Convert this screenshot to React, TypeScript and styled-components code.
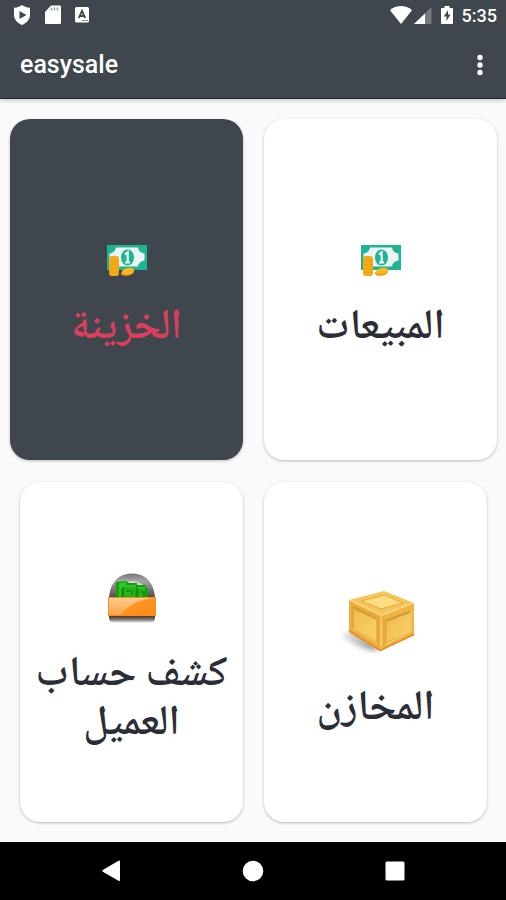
import React from 'react';
import styled, { createGlobalStyle } from 'styled-components';

const GlobalStyle = createGlobalStyle`
  *, *::before, *::after { box-sizing: border-box; }
  body {
    margin: 0;
    background: #fafafa;
    font-family: Roboto, 'Noto Sans', sans-serif;
  }
  button { border: 0; padding: 0; background: none; font: inherit; color: inherit; cursor: pointer; }
  svg { display: block; flex: none; }
`;

const Screen = styled.div`
  display: flex;
  flex-direction: column;
  min-height: 100vh;
`;

const Header = styled.header`
  flex: none;
  background: #40464e;
  color: #fff;
  border-bottom: 1px solid #25262f;
  box-shadow: 0 1px 5px rgba(0, 0, 0, 0.25);
`;

const StatusBar = styled.div`
  display: flex;
  align-items: center;
  justify-content: space-between;
  height: 32px;
  padding: 0 9px 0 12px;
`;

const StatusIcons = styled.div<{ $gap: number }>`
  display: flex;
  align-items: center;
  gap: ${({ $gap }) => $gap}px;
`;

const Clock = styled.time`
  font-size: 18px;
  line-height: 24px;
  font-weight: 500;
`;

const AppBar = styled.div`
  display: flex;
  align-items: center;
  justify-content: space-between;
  height: 66px;
  padding: 0 10px 0 20px;
`;

const Title = styled.h1`
  margin: 0;
  font-size: 25px;
  line-height: 32px;
  font-weight: 500;
`;

const MenuButton = styled.button`
  display: grid;
  place-items: center;
  width: 32px;
  height: 48px;
`;

const Main = styled.main`
  flex: 1;
  display: grid;
  grid-template-rows: 1fr 1fr;
  gap: 22px;
  padding: 20px 9px 20px 10px;
`;

const CardRow = styled.div<{ $inset?: boolean }>`
  display: grid;
  grid-template-columns: 1fr 1fr;
  gap: 21px;
  padding: 0 ${({ $inset }) => ($inset ? 10 : 0)}px;
`;

const Card = styled.button<{ $selected?: boolean }>`
  display: flex;
  flex-direction: column;
  align-items: center;
  justify-content: center;
  gap: 29px;
  padding: 20px 8px 0;
  border-radius: 20px;
  background: ${({ $selected }) => ($selected ? '#40464e' : '#fff')};
  color: ${({ $selected }) => ($selected ? '#dc3f5c' : '#2b2e36')};
  box-shadow: 0 1px 3px rgba(0, 0, 0, 0.26);
`;

const CardLabel = styled.span`
  font-family: 'Noto Naskh Arabic', 'DejaVu Sans', sans-serif;
  font-size: 42px;
  font-weight: 600;
  line-height: 49px;
  text-align: center;
`;

const NavBar = styled.nav`
  flex: none;
  display: grid;
  grid-template-columns: repeat(3, 142px);
  justify-content: center;
  height: 58px;
  background: #000;
  color: #fff;
`;

const NavButton = styled.button`
  display: grid;
  place-items: center;
`;

const ShieldIcon = () => (
  <svg width="20" height="22" viewBox="0 0 20 22" aria-hidden="true">
    <path fill="#fff" d="M10 0c2 1.500 4.500 2.500 8 2.800V10c0 4.500-3.500 8-8 10-4.500-2-8-5.500-8-10V2.800C5.500 2.500 8 1.500 10 0z" />
    <path fill="#40464e" d="M7.500 6v8l7-4z" />
  </svg>
);

const SdCardIcon = () => (
  <svg width="18" height="22" viewBox="0 0 18 22" aria-hidden="true">
    <path fill="#fff" d="M7 .5h8.500c1 0 1.500.5 1.500 1.500v15.500c0 1-.5 1.500-1.500 1.500h-13c-1 0-1.500-.5-1.500-1.500V7z" />
    <path stroke="#9a9da1" strokeWidth="1.500" d="M7.500 2.500v3M10.500 2.500v3M13.500 2.500v3" />
  </svg>
);

const LetterIcon = () => (
  <svg width="16" height="18" viewBox="0 0 16 18" aria-hidden="true">
    <rect x="1" y="0" width="14" height="15.500" rx="1.500" fill="#fff" />
    <path fill="none" stroke="#40464e" strokeWidth="1.800" d="M4.800 11 8 3.800 11.200 11M6 9h4" />
    <path stroke="#8d9195" d="M8 13.500h6" />
  </svg>
);

const WifiIcon = () => (
  <svg width="22" height="20" viewBox="0 0 22 20" aria-hidden="true">
    <path fill="#fff" d="M0 4.200C6.500-1.300 15.500-1.300 22 4.200L11 18z" />
  </svg>
);

const SignalIcon = () => (
  <svg width="18" height="18" viewBox="0 0 18 18" aria-hidden="true">
    <path fill="#777b80" d="M17.500 0v17H0z" />
    <path fill="#fff" d="M11 6.500V17H0z" />
  </svg>
);

const BatteryIcon = () => (
  <svg width="12" height="20" viewBox="0 0 12 20" aria-hidden="true">
    <path fill="#fff" d="M3.500 0h5v2H11c.6 0 1 .4 1 1v14c0 .6-.4 1-1 1H1c-.6 0-1-.4-1-1V3c0-.6.4-1 1-1h2.500z" />
    <path fill="#40464e" d="M7 4 2.800 10.500h2.700V15l4-6.500H7z" />
  </svg>
);

const MoreIcon = () => (
  <svg width="8" height="24" viewBox="0 0 8 24" fill="#fff" aria-hidden="true">
    <circle cx="4" cy="4.500" r="2.700" />
    <circle cx="4" cy="12" r="2.700" />
    <circle cx="4" cy="19.500" r="2.700" />
  </svg>
);

const MoneyIcon = () => (
  <svg width="40" height="32" viewBox="0 0 40 32" aria-hidden="true">
    <rect width="40" height="25" y="1" fill="#1fb592" />
    <path fill="#edf4f6" d="M9 3.500h22c.5 3 2.500 5.500 6.500 6v7c-4 .5-6 3-6.500 6H9c-.5-3-2.500-5.500-6.500-6v-7c4-.5 6-3 6.500-6z" />
    <ellipse cx="20.500" cy="13.500" rx="6.500" ry="8" fill="#1fb592" />
    <path fill="none" stroke="#edf4f6" strokeWidth="2.200" d="M18 10.500l2.700-2V18.500M18 18.500h5" />
    <rect x="2" y="12" width="10" height="20" rx="3" fill="#f3aa16" />
    <path stroke="#dd9712" d="M2.500 16.500h9M2.500 20.500h9M2.500 24.500h9M2.500 28.500h9" opacity=".3" />
    <ellipse cx="20.500" cy="28.500" rx="6.500" ry="3.200" fill="#e89b0d" transform="rotate(-10 20.500 28.500)" />
    <ellipse cx="21" cy="27" rx="6.200" ry="3" fill="#fbb81f" transform="rotate(-12 21 27)" />
  </svg>
);

const WalletIcon = () => (
  <svg width="48" height="50" viewBox="0 0 48 50" aria-hidden="true">
    <defs>
      <linearGradient id="arch" x2="0" y2="1">
        <stop stopColor="#777" />
        <stop offset=".3" stopColor="#a5a5a5" />
        <stop offset="1" stopColor="#4a4a4a" />
      </linearGradient>
      <linearGradient id="pocket" x2="1" y2="1">
        <stop stopColor="#ff9d37" />
        <stop offset="1" stopColor="#ff8a0e" />
      </linearGradient>
      <linearGradient id="shine" x2="0" y2="1">
        <stop stopColor="#ffd6a3" />
        <stop offset="1" stopColor="#ffa64a" />
      </linearGradient>
      <linearGradient id="base" x2="0" y2="1">
        <stop stopColor="#333" />
        <stop offset=".5" stopColor="#666" />
        <stop offset="1" stopColor="#ddd" />
      </linearGradient>
    </defs>
    <path fill="url(#base)" d="M1 42h46v3c0 3-2 4.500-5 4.500H6c-3 0-5-1.500-5-4.500z" />
    <path fill="url(#arch)" d="M1 25C2 9 11 .5 24 .5S46 9 47 25z" />
    <path fill="#d4d4d4" d="M8 25C9 13 15 8 24 8s15 5 16 17z" />
    <path fill="#16a010" d="M8 9l10-1 3 2h8v2l9 0v3l2 0v10H8z" />
    <path fill="#2bc920" d="M11 10l7-1v3h11v2h8v2H13v8h-2z" />
    <path fill="#24b31a" d="M15 14h12v10H15zM31 16h6v8h-6z" />
    <path fill="none" stroke="#0a7d0a" strokeWidth="1.200" d="M15 14v10M29 12v12M18 18h6v4M32 19h4v5" />
    <path fill="url(#pocket)" d="M0 24h48v19H0z" />
    <path fill="url(#shine)" d="M1 25h44C31 27 22 31 11 43H1z" opacity=".8" />
    <path fill="none" stroke="#f18e24" d="M.5 24.500h47v18H.5z" />
    <path stroke="#663d12" d="M1 43.500h46" />
  </svg>
);

const CrateIcon = () => (
  <svg width="80" height="68" viewBox="0 0 80 68" aria-hidden="true">
    <defs>
      <filter id="soft" x="-30%" y="-30%" width="160%" height="160%">
        <feGaussianBlur stdDeviation="2.500" />
      </filter>
      <linearGradient id="crateShadow">
        <stop stopColor="#999" stopOpacity=".2" />
        <stop offset="1" stopColor="#333" stopOpacity=".7" />
      </linearGradient>
      <linearGradient id="panel" x2="1" y2="1">
        <stop stopColor="#efb94d" />
        <stop offset="1" stopColor="#fad468" />
      </linearGradient>
    </defs>
    <path fill="url(#crateShadow)" filter="url(#soft)" d="M5 45l12-4 27 20h-9C22 58 10 53 5 45z" />
    <path fill="#f6c65a" d="M13 11 48 2l30 12-33 13z" />
    <path fill="#eeae3c" d="M13 11l32 16v35L13 43z" />
    <path fill="#f1b440" d="M45 27l33-13v32L45 62z" />
    <path fill="#fcdc80" stroke="#e0ab45" d="M25 12l24-6 18 8-22 6z" />
    <path fill="url(#panel)" stroke="#d9992f" d="M17 17l24 12v24L17 39z" />
    <path fill="url(#panel)" stroke="#d9992f" d="M50 31l25-9v20L50 54z" />
    <path fill="none" stroke="#b98526" strokeWidth="2" opacity=".5" d="M18 19l22 11M51 32l23-9" />
    <path fill="none" stroke="#ffe6a8" d="M17 39l24 15M50 55l25-13V22M14 11l31 15M46 26l31-12M45 28v32" opacity=".8" />
    <path fill="none" stroke="#e08d25" strokeWidth="1.500" d="M13 42l31 19.500L78 45.500" />
    <path fill="none" stroke="#e39a32" d="M42 27v33M48 27v32" opacity=".6" />
  </svg>
);

const BackIcon = () => (
  <svg width="20" height="22" viewBox="0 0 20 22" aria-hidden="true">
    <path fill="#fff" d="M19 1.500v18.500a1 1 0 0 1-1.500.8L1.800 11.700a1 1 0 0 1 0-1.700L17.500.8A1 1 0 0 1 19 1.500z" />
  </svg>
);

const HomeIcon = () => (
  <svg width="22" height="22" viewBox="0 0 22 22" aria-hidden="true">
    <circle cx="11" cy="11" r="10.300" fill="#fff" />
  </svg>
);

const RecentsIcon = () => (
  <svg width="20" height="20" viewBox="0 0 20 20" aria-hidden="true">
    <rect x="0.500" y="0.500" width="19" height="19" rx="1.500" fill="#fff" />
  </svg>
);

export default function App() {
  return (
    <Screen>
      <GlobalStyle />
      <Header>
        <StatusBar>
          <StatusIcons $gap={12}>
            <ShieldIcon />
            <SdCardIcon />
            <LetterIcon />
          </StatusIcons>
          <StatusIcons $gap={9}>
            <StatusIcons $gap={2}>
              <WifiIcon />
              <SignalIcon />
            </StatusIcons>
            <BatteryIcon />
            <Clock>5:35</Clock>
          </StatusIcons>
        </StatusBar>
        <AppBar>
          <Title>easysale</Title>
          <MenuButton type="button" aria-label="More options">
            <MoreIcon />
          </MenuButton>
        </AppBar>
      </Header>
      <Main dir="rtl" lang="ar">
        <CardRow>
          <Card type="button">
            <MoneyIcon />
            <CardLabel>المبيعات</CardLabel>
          </Card>
          <Card type="button" $selected aria-pressed="true">
            <MoneyIcon />
            <CardLabel>الخزينة</CardLabel>
          </Card>
        </CardRow>
        <CardRow $inset>
          <Card type="button">
            <CrateIcon />
            <CardLabel>المخازن</CardLabel>
          </Card>
          <Card type="button">
            <WalletIcon />
            <CardLabel>كشف حساب العميل</CardLabel>
          </Card>
        </CardRow>
      </Main>
      <NavBar>
        <NavButton type="button" aria-label="Back">
          <BackIcon />
        </NavButton>
        <NavButton type="button" aria-label="Home">
          <HomeIcon />
        </NavButton>
        <NavButton type="button" aria-label="Recent apps">
          <RecentsIcon />
        </NavButton>
      </NavBar>
    </Screen>
  );
}
